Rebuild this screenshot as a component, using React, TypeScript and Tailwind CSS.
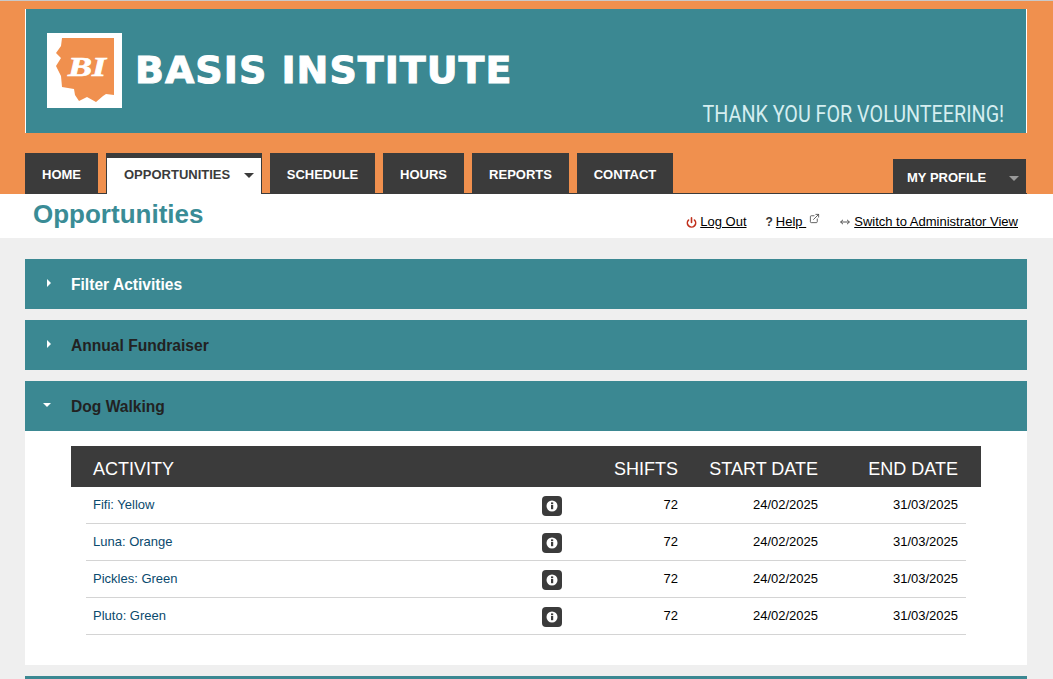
import { ExternalLink, Power } from "lucide-react"

const tabs = [
  { label: "HOME", width: "w-[73px]" },
  { label: "OPPORTUNITIES", width: "w-[156px]" },
  { label: "SCHEDULE", width: "w-[105px]" },
  { label: "HOURS", width: "w-[81px]" },
  { label: "REPORTS", width: "w-[97px]" },
  { label: "CONTACT", width: "w-[96px]" },
]

const activities = ["Fifi: Yellow", "Luna: Orange", "Pickles: Green", "Pluto: Green"]

const Logo = () => (
  <svg width="75" height="75" viewBox="0 0 75 75" className="shrink-0">
    <rect width="75" height="75" fill="#fff" />
    <polygon
      points="15,5 67,5 67,62 59,61 56,63 49,69 40,64 32,68 28,62 27,56 15,54 14,43 9,33 14,25 9,20 14,13"
      fill="#f0904e"
    />
    <text
      x="21"
      y="43"
      fill="#fff"
      stroke="#fff"
      strokeWidth="0.7"
      fontFamily="'Liberation Serif', serif"
      fontWeight="700"
      fontStyle="italic"
      fontSize="27"
      textLength="38"
      lengthAdjust="spacingAndGlyphs"
    >
      BI
    </text>
  </svg>
)

const InfoButton = () => (
  <span className="flex h-5 w-5 items-center justify-center rounded-[4px] bg-[#3b3b3b]">
    <svg width="12" height="12" viewBox="0 0 12 12">
      <circle cx="6" cy="6" r="5.5" fill="#fff" />
      <rect x="5" y="5" width="2.2" height="4.2" fill="#3b3b3b" />
      <rect x="5" y="2.4" width="2.2" height="1.8" fill="#3b3b3b" />
    </svg>
  </span>
)

const Bar = ({ title, open, light }: { title: string; open?: boolean; light?: boolean }) => (
  <div className="flex h-[50px] items-center bg-[#3b8892]">
    <div className="flex w-[46px] justify-center pb-[3px] pr-[2px]">
      {open ? (
        <span className="h-0 w-0 border-x-[4px] border-t-[4px] border-x-transparent border-t-white" />
      ) : (
        <span className="ml-[3px] h-0 w-0 border-y-[4px] border-l-[4px] border-y-transparent border-l-white" />
      )}
    </div>
    <span className={`pt-[2px] text-[15.6px] font-bold ${light ? "text-white" : "text-[#222222]"}`}>{title}</span>
  </div>
)

const App = () => {
  return (
    <div className="h-[679px] overflow-hidden bg-[#efefef] font-['Liberation_Sans',Arial,sans-serif]">
      <div className="h-px bg-[#c9c9c9]" />

      <div className="flex h-[193px] flex-col bg-[#f0904e] pl-[25px] pr-[26px] pt-2">
        <div className="flex h-[124px] w-[1002px] border-x border-white bg-[#3b8892]">
          <div className="flex items-start pl-[21px] pt-6">
            <Logo />
            <span className="ml-[13px] mt-[12px] font-['DejaVu_Sans',sans-serif] text-[38px] leading-[50px] font-bold tracking-[1px] whitespace-nowrap text-white [-webkit-text-stroke:1px_white]">
              BASIS INSTITUTE
            </span>
          </div>
          <div className="ml-auto origin-right scale-x-[0.858] self-end pb-[2px] pr-[25px] font-['Roboto',sans-serif] text-[23px] leading-[32px] whitespace-nowrap text-[#d5eef0]">
            THANK YOU FOR VOLUNTEERING!
          </div>
        </div>

        <div className="mt-5 flex h-[41px] items-end border-b border-[#3b3b3b]">
          <div className="flex h-10 gap-2">
            {tabs.map(tab =>
              tab.label === "OPPORTUNITIES" ? (
                <div
                  key={tab.label}
                  className={`flex h-[41px] items-center border-x border-t-[5px] border-[#3b3b3b] bg-white pb-[2px] pl-[17px] text-[13px] font-bold text-[#3b3b3b] ${tab.width}`}
                >
                  {tab.label}
                  <span className="ml-[14px] h-0 w-0 border-x-[5px] border-t-[5px] border-x-transparent border-t-[#3b3b3b]" />
                </div>
              ) : (
                <div
                  key={tab.label}
                  className={`flex items-center justify-center bg-[#3b3b3b] pt-[3px] text-[13px] font-bold text-white ${tab.width}`}
                >
                  {tab.label}
                </div>
              )
            )}
          </div>
          <div className="ml-auto mr-px flex h-[34px] w-[133px] items-center bg-[#3b3b3b] pl-[14px] pt-[4px] text-[13px] font-bold text-white">
            MY PROFILE
            <span className="ml-[23px] h-0 w-0 border-x-[5px] border-t-[5px] border-x-transparent border-t-[#9a9a9a]" />
          </div>
        </div>
      </div>

      <div className="flex h-11 items-start bg-white pl-[33px] pr-[35px]">
        <h1 className="text-[26px] leading-[41px] font-bold text-[#3a8c96]">Opportunities</h1>
        <div className="ml-auto flex items-center pt-[19px] text-[13px] leading-4 text-black">
          <Power className="mr-[3px] h-[11px] w-[11px] text-[#c0301c]" strokeWidth={3.5} />
          <span className="underline">Log Out</span>
          <span className="ml-[19px] mr-[3px] text-[12px] font-bold text-[#333333]">?</span>
          <span className="underline">Help&nbsp;</span>
          <ExternalLink className="mb-[7px] ml-[3px] h-[11px] w-[11px] text-[#444444]" strokeWidth={1.8} />
          <svg width="10" height="6" viewBox="0 0 10 6" className="ml-[20px] mr-[4px]" fill="none" stroke="#444444" strokeWidth="0.9">
            <path d="M3 0.8 L0.6 3 L3 5.2 M0.6 3 H9.4 M7 0.8 L9.4 3 L7 5.2" />
          </svg>
          <span className="underline">Switch to Administrator View</span>
        </div>
      </div>

      <div className="mt-[21px] mr-px flex flex-col gap-[11px] px-[25px]">
        <Bar title="Filter Activities" light />
        <Bar title="Annual Fundraiser" />
        <div>
          <Bar title="Dog Walking" open />
          <div className="h-[234px] bg-white px-[46px] pt-[15px]">
            <div className="grid h-[41px] grid-cols-[449px_20px_116px_140px_140px] items-center bg-[#3b3b3b] pl-[22px] pt-[5px] text-[18px] text-white">
              <span>ACTIVITY</span>
              <span />
              <span className="text-right">SHIFTS</span>
              <span className="text-right">START DATE</span>
              <span className="text-right">END DATE</span>
            </div>
            {activities.map(name => (
              <div
                key={name}
                className="mx-[15px] grid h-[37px] grid-cols-[449px_20px_116px_140px_140px] items-center border-b border-[#d4d4d4] pl-[7px] text-[13px] text-black"
              >
                <span className="text-[#0a4a6e]">{name}</span>
                <span className="pt-[2px]">
                  <InfoButton />
                </span>
                <span className="text-right">72</span>
                <span className="text-right">24/02/2025</span>
                <span className="text-right">31/03/2025</span>
              </div>
            ))}
          </div>
        </div>
        <div className="h-[50px] bg-[#3b8892]" />
      </div>
    </div>
  )
}

export default App
